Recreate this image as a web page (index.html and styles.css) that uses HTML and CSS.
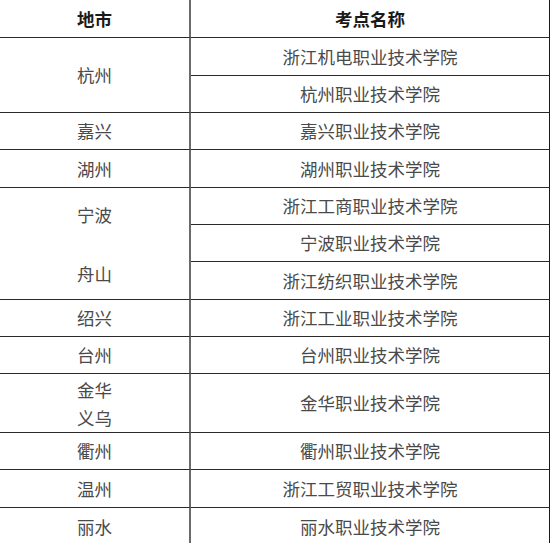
FILE: index.html
```html
<!DOCTYPE html>
<html lang="zh-CN">
<head>
<meta charset="utf-8">
<title>考点名称</title>
<link rel="stylesheet" href="styles.css">
</head>
<body>
<div class="table">
  <div class="cell left head r1">地市</div>
  <div class="cell right head r1">考点名称</div>

  <div class="cell left r2-3">杭州</div>
  <div class="cell right r2">浙江机电职业技术学院</div>
  <div class="cell right r3">杭州职业技术学院</div>

  <div class="cell left r4">嘉兴</div>
  <div class="cell right r4">嘉兴职业技术学院</div>

  <div class="cell left r5">湖州</div>
  <div class="cell right r5">湖州职业技术学院</div>

  <div class="cell left r6-8 wide"><span>宁波</span><span>舟山</span></div>
  <div class="cell right r6">浙江工商职业技术学院</div>
  <div class="cell right r7">宁波职业技术学院</div>
  <div class="cell right r8">浙江纺织职业技术学院</div>

  <div class="cell left r9">绍兴</div>
  <div class="cell right r9">浙江工业职业技术学院</div>

  <div class="cell left r10">台州</div>
  <div class="cell right r10">台州职业技术学院</div>

  <div class="cell left r11 pair"><span>金华</span><span>义乌</span></div>
  <div class="cell right r11">金华职业技术学院</div>

  <div class="cell left r12">衢州</div>
  <div class="cell right r12">衢州职业技术学院</div>

  <div class="cell left r13">温州</div>
  <div class="cell right r13">浙江工贸职业技术学院</div>

  <div class="cell left r14">丽水</div>
  <div class="cell right r14">丽水职业技术学院</div>
</div>
</body>
</html>
```
FILE: styles.css
```css
html, body {
  margin: 0;
  padding: 0;
  background: #ffffff;
}

.table {
  width: 550px;
  display: grid;
  grid-template-columns: 191px 359px;
  grid-template-rows: 38px 38px 37px 37px 38px 37px 37px 38px 37px 37px 59px 37px 38px 38px;
  font-family: "Noto Sans CJK SC", "Noto Sans", sans-serif;
  font-size: 17.5px;
  color: #4a4a4a;
}

.cell {
  box-sizing: border-box;
  display: flex;
  align-items: center;
  justify-content: center;
  border-bottom: 1px solid #2a2a2a;
  line-height: 1;
  white-space: nowrap;
}

.left {
  grid-column: 1;
  border-right: 2px solid #6a6a6a;
}

.right {
  grid-column: 2;
  border-right: 1px solid #1a1a1a;
}

.head {
  font-weight: 700;
  color: #1a1a1a;
  font-size: 17.5px;
}

.wide {
  flex-direction: column;
  justify-content: center;
  gap: 42px;
  line-height: 17px;
}

.pair {
  flex-direction: column;
  justify-content: center;
  gap: 11px;
  line-height: 17px;
  padding-top: 1px;
}

.r1 { grid-row: 1; }
.r2 { grid-row: 2; }
.r3 { grid-row: 3; }
.r2-3 { grid-row: 2 / 4; }
.r4 { grid-row: 4; }
.r5 { grid-row: 5; }
.r6 { grid-row: 6; }
.r7 { grid-row: 7; }
.r8 { grid-row: 8; }
.r6-8 { grid-row: 6 / 9; }
.r9 { grid-row: 9; }
.r10 { grid-row: 10; }
.r11 { grid-row: 11; }
.r12 { grid-row: 12; }
.r13 { grid-row: 13; }
.r14 { grid-row: 14; }
```
